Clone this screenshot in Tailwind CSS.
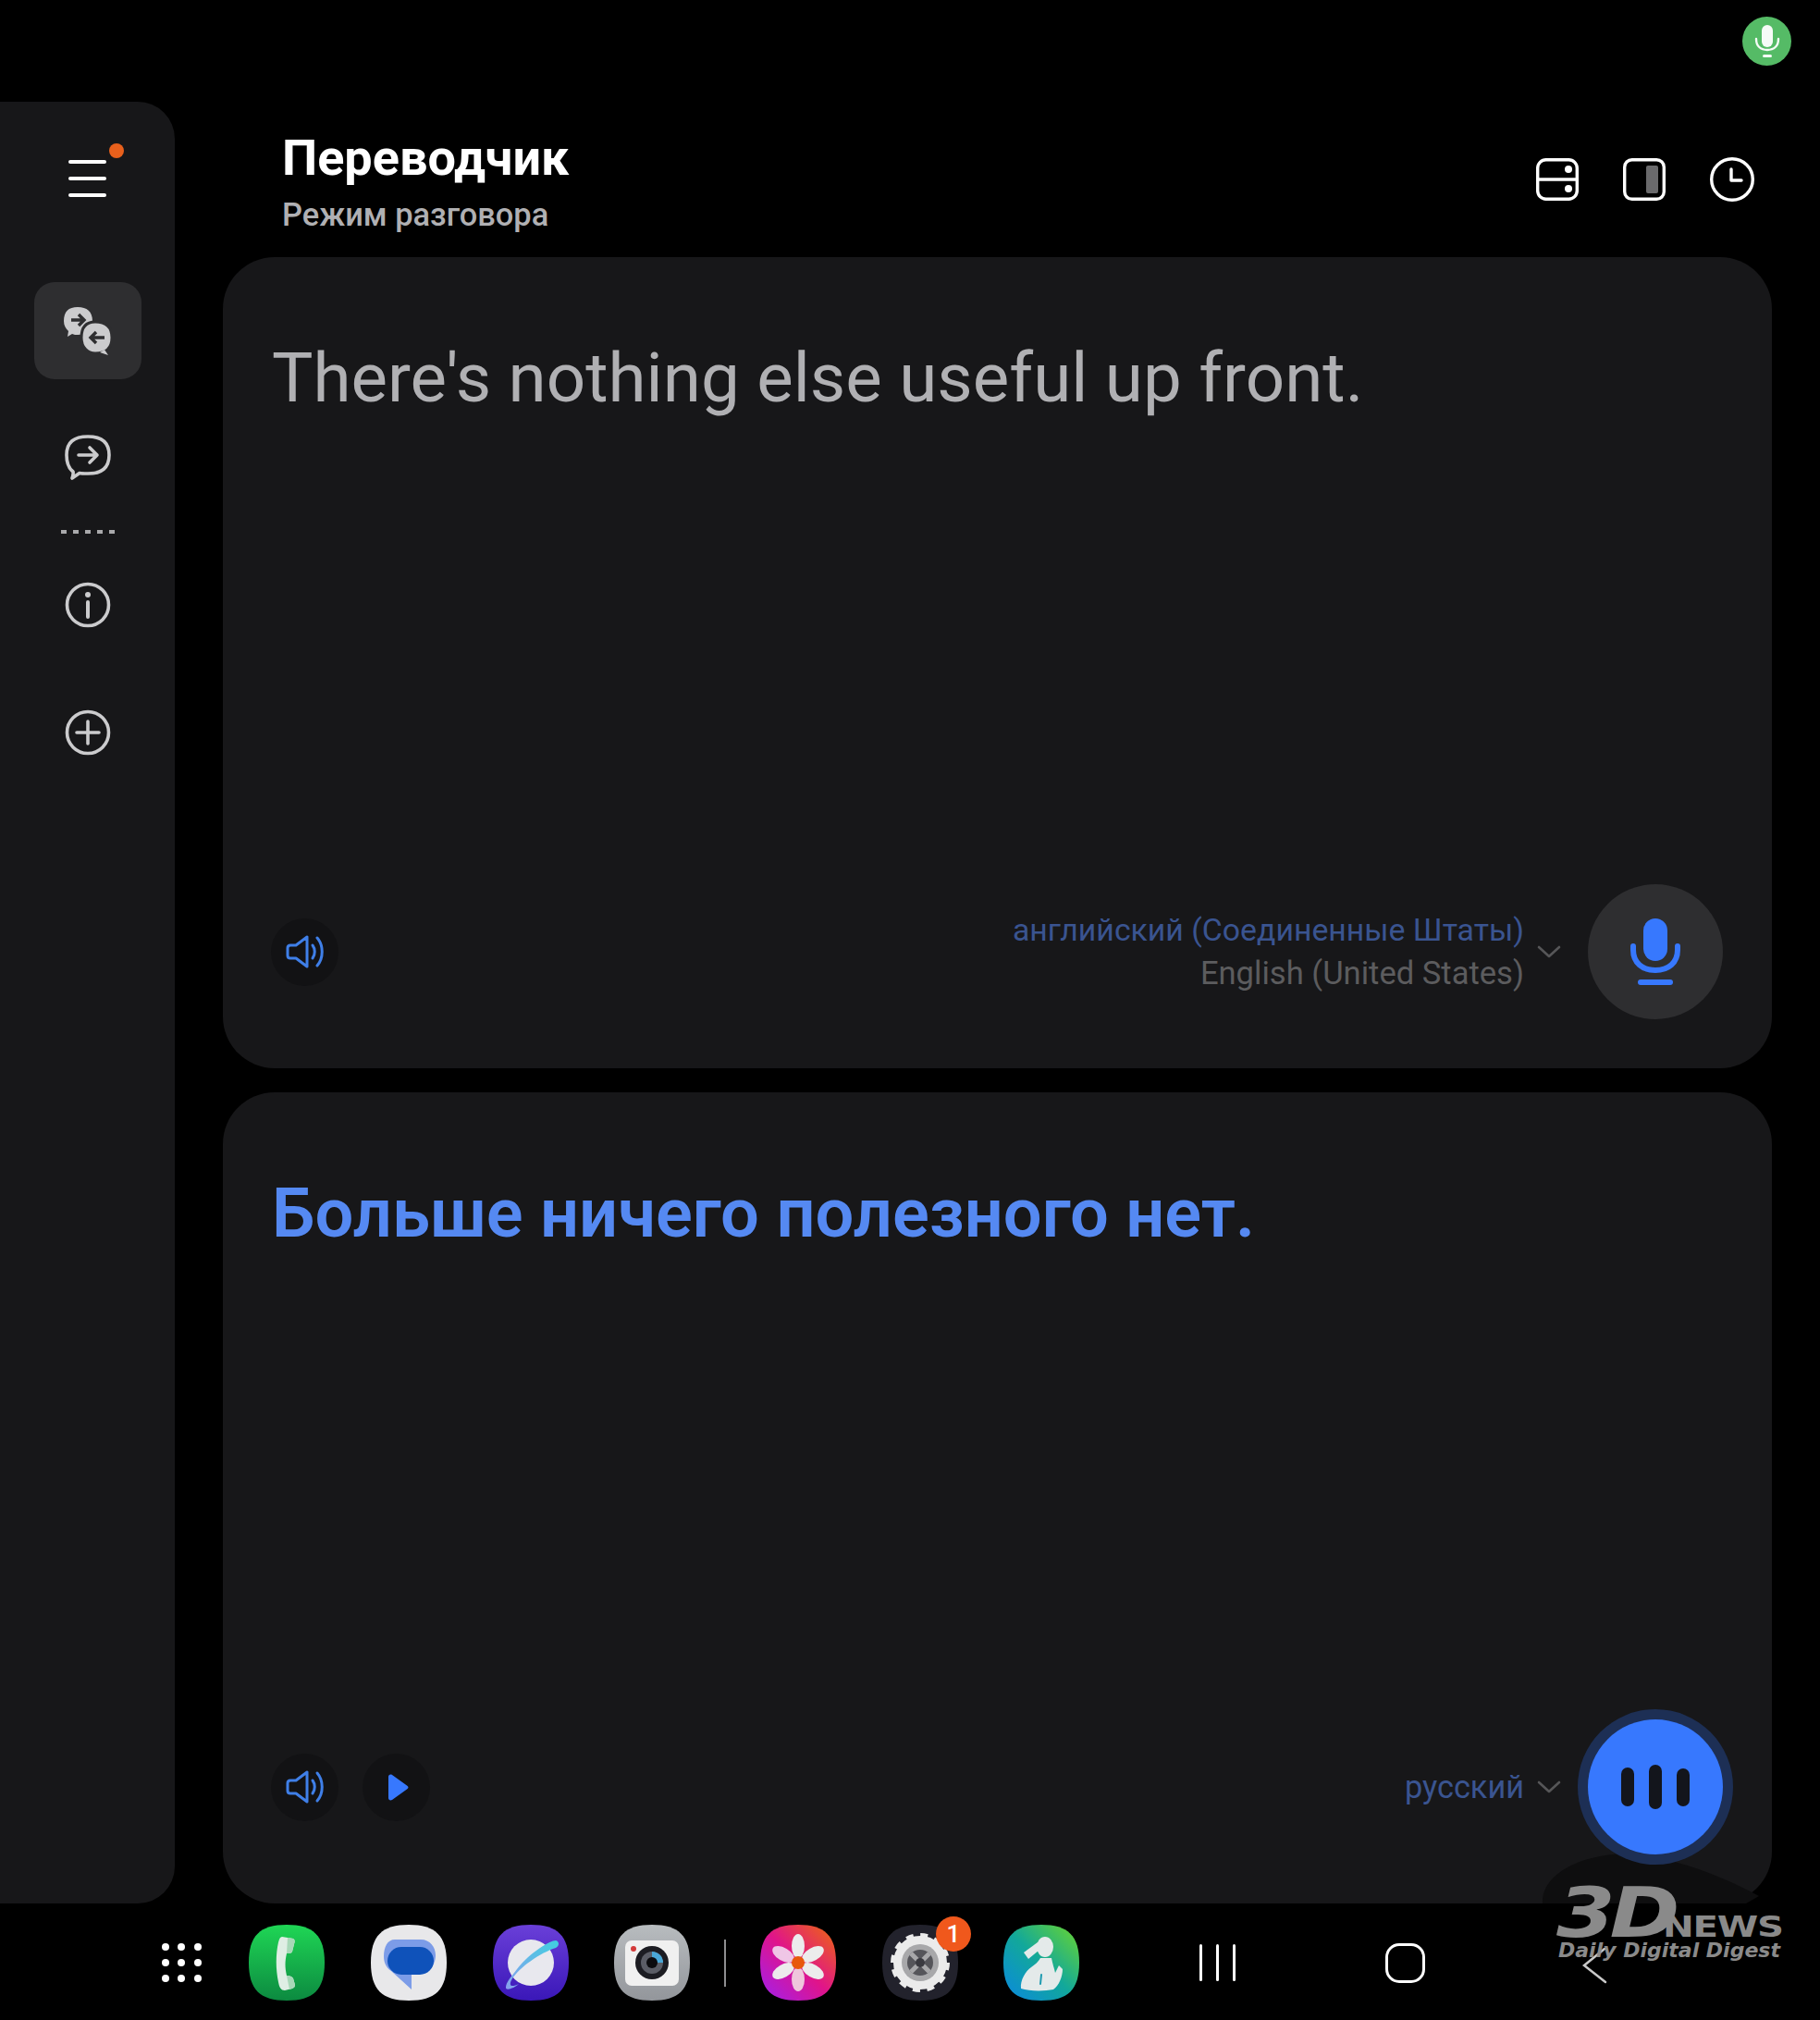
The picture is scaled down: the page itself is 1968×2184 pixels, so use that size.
<!DOCTYPE html>
<html lang="ru">
<head>
    <meta charset="UTF-8">
    <meta name="viewport" content="width=device-width, initial-scale=1.0">
    <title>Переводчик</title>
    <script src="https://cdn.jsdelivr.net/npm/@tailwindcss/browser@4"></script>
</head>
<body class="relative w-[1968px] h-[2184px] overflow-hidden bg-black font-['Roboto',sans-serif]">

    <!-- Status bar -->
    <div class="h-[110px] flex justify-end items-start pt-[18px] pr-[31px]">
        <div class="w-[53px] h-[53px] rounded-full bg-[#55bb66] flex items-center justify-center">
            <svg width="28" height="36" viewBox="0 0 28 36" fill="none">
                <rect x="8" y="0" width="12" height="24" rx="6" fill="#f6fbf7"/>
                <path d="M2 15c0 8 5 12 12 12s12-4 12-12" stroke="#f6fbf7" stroke-width="2.400" stroke-linecap="round"/>
                <rect x="9" y="32" width="10" height="3" rx="1.500" fill="#f6fbf7"/>
            </svg>
        </div>
    </div>

    <!-- Body -->
    <div class="h-[1948px] flex">
        <!-- Side rail -->
        <aside class="w-[189px] bg-[#171719] rounded-r-[40px] flex flex-col items-center relative">
            <div class="relative mt-[63px] w-[41px] flex flex-col gap-[14px]">
                <span class="block h-[4px] rounded-full bg-white"></span>
                <span class="block h-[4px] rounded-full bg-white"></span>
                <span class="block h-[4px] rounded-full bg-white"></span>
                <span class="absolute left-[44px] top-[-18px] w-[16px] h-[16px] rounded-full bg-[#e8601c]"></span>
            </div>
            <div class="mt-[92px] w-[116px] h-[105px] rounded-[22px] bg-[#2e2e30] flex items-center justify-center">
                <svg width="52" height="52" viewBox="0 0 52 52">
                    <path d="M15 0C25 0 31 5 31 15S25 30 15 30C13 30 11 30 9 29L4 32L5 26C2 23 0 20 0 15C0 5 5 0 15 0Z" fill="#cbcbcd"/>
                    <path d="M8 14H21M16 8l6 6-6 6" stroke="#2e2e30" stroke-width="3.400" fill="none"/>
                    <path d="M34 16C46 16 52 22 52 33S46 50 34 50C26 50 19 44 19 33S24 16 34 16Z" fill="#cbcbcd" stroke="#2e2e30" stroke-width="3"/>
                    <path d="M44 46l4 6-9-3z" fill="#cbcbcd"/>
                    <path d="M44 33H30M35 27l-6 6 6 6" stroke="#2e2e30" stroke-width="3.400" fill="none"/>
                </svg>
            </div>
            <svg class="mt-[60px]" width="50" height="50" viewBox="0 0 50 50" fill="none" stroke="#cbcbcd" stroke-width="3.600" stroke-linecap="round" stroke-linejoin="round">
                <path d="M25 2C40 2 48 8 48 22S40 42 25 42C21 42 18 42 16 41.500L8 47C9 44 9.500 42 9 40C4 36 2 30 2 22C2 8 10 2 25 2Z"/>
                <path d="M15 22H35M27 14l8 8-8 8"/>
            </svg>
            <div class="mt-[53px] flex gap-[7px]">
                <span class="w-[6px] h-[4px] bg-[#a9a9ab]"></span>
                <span class="w-[6px] h-[4px] bg-[#a9a9ab]"></span>
                <span class="w-[6px] h-[4px] bg-[#a9a9ab]"></span>
                <span class="w-[6px] h-[4px] bg-[#a9a9ab]"></span>
                <span class="w-[6px] h-[4px] bg-[#a9a9ab]"></span>
            </div>
            <svg class="mt-[52px]" width="50" height="50" viewBox="0 0 50 50" fill="none" stroke="#cbcbcd" stroke-width="3.600" stroke-linecap="round">
                <circle cx="25" cy="25" r="22.500"/>
                <circle cx="25" cy="14" r="3" fill="#cbcbcd" stroke="none"/>
                <path d="M25 22V38" stroke-width="4"/>
            </svg>
            <svg class="mt-[88px]" width="50" height="50" viewBox="0 0 50 50" fill="none" stroke="#cbcbcd" stroke-width="3.600" stroke-linecap="round">
                <circle cx="25" cy="25" r="22.500"/>
                <path d="M13 25H37M25 13V37"/>
            </svg>
        </aside>

        <main class="ml-[52px] w-[1675px] flex flex-col">
            <!-- Header -->
            <header class="h-[168px] flex items-start justify-between">
                <div class="pl-[64px] pt-[30px]">
                    <h1 class="text-[54px] leading-[62px] font-bold text-white">Переводчик</h1>
                    <p class="mt-[10px] text-[34.400px] leading-[40px] font-medium text-[#b0b0b3]">Режим разговора</p>
                </div>
                <div class="flex items-center gap-[48px] pt-[60px] pr-[19px]">
                    <svg width="46" height="46" viewBox="0 0 46 46" fill="none" stroke="#fff" stroke-width="3.400">
                        <rect x="1.700" y="1.700" width="42.600" height="42.600" rx="9"/>
                        <path d="M2 23H44"/>
                        <circle cx="35" cy="12" r="4" fill="#fff" stroke="none"/>
                        <circle cx="35" cy="33" r="4" fill="#fff" stroke="none"/>
                    </svg>
                    <svg width="46" height="46" viewBox="0 0 46 46" fill="none" stroke="#fff" stroke-width="3.400">
                        <rect x="1.700" y="1.700" width="42.600" height="42.600" rx="8"/>
                        <rect x="25" y="8" width="13" height="30" rx="2" fill="#6a6a6c" stroke="none"/>
                    </svg>
                    <svg width="48" height="48" viewBox="0 0 48 48" fill="none" stroke="#fff" stroke-width="3.400" stroke-linecap="round" stroke-linejoin="round">
                        <circle cx="24" cy="24" r="22.300"/>
                        <path d="M23 13V25H34"/>
                    </svg>
                </div>
            </header>

            <!-- Source card -->
            <section class="h-[877px] rounded-[56px] bg-[#171719] flex flex-col justify-between pl-[52px] pr-[53px] pb-[53px]">
                <p class="pl-[1px] pt-[78px] text-[74.500px] leading-[106px] text-[#b0b0b3]">There's nothing else useful up front.</p>
                <div class="h-[146px] flex items-center">
                    <div class="w-[73px] h-[73px] rounded-full bg-[#121214] flex items-center justify-center">
                        <svg width="42" height="36" viewBox="0 0 42 36" fill="none" stroke="#3f7fe8" stroke-width="3" stroke-linecap="round" stroke-linejoin="round">
                            <path d="M23 2V34L11 25H5C3 25 2 24 2 22V14C2 12 3 11 5 11H11Z"/>
                            <path d="M29 11C32 15 32 21 29 25"/>
                            <path d="M34 3C41 11 41 25 34 33"/>
                        </svg>
                    </div>
                    <div class="ml-auto text-right leading-[47px]">
                        <p class="text-[33.800px] text-[#3a5490]">английский (Соединенные Штаты)</p>
                        <p class="text-[34.600px] text-[#5c5c5e]">English (United States)</p>
                    </div>
                    <svg class="ml-[14px] mr-[29px]" width="26" height="14" viewBox="0 0 26 14" fill="none" stroke="#565658" stroke-width="2.600" stroke-linecap="round" stroke-linejoin="round"><path d="M2 2L13 12L24 2"/></svg>
                    <div class="w-[146px] h-[146px] rounded-full bg-[#2e2e30] flex items-center justify-center">
                        <svg width="54" height="72" viewBox="0 0 54 72" fill="none">
                            <rect x="14" y="0" width="26" height="46" rx="13" fill="#3778fe"/>
                            <path d="M3 30V34C3 48 13 56 27 56S51 48 51 34V30" stroke="#3778fe" stroke-width="6" stroke-linecap="round"/>
                            <rect x="8" y="66" width="38" height="6" rx="3" fill="#3778fe"/>
                        </svg>
                    </div>
                </div>
            </section>

            <!-- Translation card -->
            <section class="mt-[26px] h-[877px] rounded-[56px] bg-[#171719] flex flex-col justify-between pl-[52px] pr-[53px] pb-[53px]">
                <p class="pl-[1px] pt-[78px] text-[74px] leading-[106px] font-semibold text-[#5589f2]">Больше ничего полезного нет.</p>
                <div class="h-[146px] flex items-center">
                    <div class="w-[73px] h-[73px] rounded-full bg-[#121214] flex items-center justify-center">
                        <svg width="42" height="36" viewBox="0 0 42 36" fill="none" stroke="#3f7fe8" stroke-width="3" stroke-linecap="round" stroke-linejoin="round">
                            <path d="M23 2V34L11 25H5C3 25 2 24 2 22V14C2 12 3 11 5 11H11Z"/>
                            <path d="M29 11C32 15 32 21 29 25"/>
                            <path d="M34 3C41 11 41 25 34 33"/>
                        </svg>
                    </div>
                    <div class="ml-[26px] w-[73px] h-[73px] rounded-full bg-[#121214] flex items-center justify-center">
                        <svg class="ml-[2px]" width="24" height="29" viewBox="0 0 24 29"><path d="M2 3C2 1 4 0 6 1L22 12.500C24 13.500 24 15.500 22 16.500L6 28C4 29 2 28 2 26Z" fill="#3778fe"/></svg>
                    </div>
                    <p class="ml-auto text-[34.300px] leading-[47px] text-[#3a5490]">русский</p>
                    <svg class="ml-[14px] mr-[29px]" width="26" height="14" viewBox="0 0 26 14" fill="none" stroke="#565658" stroke-width="2.600" stroke-linecap="round" stroke-linejoin="round"><path d="M2 2L13 12L24 2"/></svg>
                    <div class="relative z-10 w-[146px] h-[146px] rounded-full bg-[#3778fe] ring-[11px] ring-[#1d2f55] flex items-center justify-center gap-[16px]">
                        <span class="w-[14px] h-[42px] rounded-full bg-[#13151c]"></span>
                        <span class="w-[14px] h-[48px] rounded-full bg-[#13151c]"></span>
                        <span class="w-[14px] h-[41px] rounded-full bg-[#13151c]"></span>
                    </div>
                </div>
            </section>
        </main>
    </div>

    <!-- Dock -->
    <nav class="h-[126px] pt-[2px] flex items-center">
        <div class="ml-[175px] w-[43px] grid grid-cols-3 gap-x-[9px] gap-y-[9px]">
            <span class="w-[8px] h-[8px] rounded-full bg-white"></span><span class="w-[8px] h-[8px] rounded-full bg-white"></span><span class="w-[8px] h-[8px] rounded-full bg-white"></span>
            <span class="w-[8px] h-[8px] rounded-full bg-white"></span><span class="w-[8px] h-[8px] rounded-full bg-white"></span><span class="w-[8px] h-[8px] rounded-full bg-white"></span>
            <span class="w-[8px] h-[8px] rounded-full bg-white"></span><span class="w-[8px] h-[8px] rounded-full bg-white"></span><span class="w-[8px] h-[8px] rounded-full bg-white"></span>
        </div>

        <!-- Phone -->
        <svg class="ml-[51px]" width="82" height="82" viewBox="0 0 82 82">
            <defs><linearGradient id="gPhone" x1="0" y1="0" x2="0" y2="1"><stop offset="0" stop-color="#1fd655"/><stop offset="1" stop-color="#0c8a40"/></linearGradient></defs>
            <path d="M41 0C70 0 82 12 82 41S70 82 41 82S0 70 0 41S12 0 41 0Z" fill="url(#gPhone)"/>
            <path d="M36 13L48 15C50 16 50 18 49 21L47 29C46 31 44 31 41 31C39 40 39 46 41 55C44 55 47 56 48 58L50 65C50 67 49 68 47 69L39 71C35 71 33 68 32 62C29 48 29 32 32 19C33 15 34 13 36 13Z" fill="#dfeee4"/>
            <path d="M42 14L48 15C50 16 50 18 49 21L47 29C46 31 44 31 41 31ZM41 55C44 55 47 56 48 58L50 65C50 67 49 68 47 69L44 70Z" fill="#a8d8b8"/>
        </svg>
        <!-- Messages -->
        <svg class="ml-[50px]" width="82" height="82" viewBox="0 0 82 82">
            <path d="M41 0C70 0 82 12 82 41S70 82 41 82S0 70 0 41S12 0 41 0Z" fill="#e8e8ea"/>
            <path d="M26 16H54C64 16 70 24 70 33C70 44 62 53 52 53H44V70L22 50C16 46 14 40 14 34C14 24 18 16 26 16Z" fill="#7c9ce8"/>
            <rect x="18" y="24" width="50" height="30" rx="15" fill="#0f52ba"/>
        </svg>
        <!-- Internet -->
        <svg class="ml-[50px]" width="82" height="82" viewBox="0 0 82 82">
            <defs>
                <linearGradient id="gNet" x1="0" y1="0" x2="0" y2="1"><stop offset="0" stop-color="#6a3fd8"/><stop offset="1" stop-color="#3a17b8"/></linearGradient>
                <linearGradient id="gRing" x1="1" y1="0" x2="0" y2="1"><stop offset="0" stop-color="#3fd0e0"/><stop offset="1" stop-color="#8aa0ee"/></linearGradient>
            </defs>
            <path d="M41 0C70 0 82 12 82 41S70 82 41 82S0 70 0 41S12 0 41 0Z" fill="url(#gNet)"/>
            <circle cx="41" cy="41" r="25" fill="#e8e8ee"/>
            <path d="M68 17C62 17 40 30 26 48C20 56 14 62 14 68C14 72 24 68 28 64C20 68 17 66 20 60C28 46 52 30 68 25C72 23 72 18 68 17Z" fill="url(#gRing)"/>
        </svg>
        <!-- Camera -->
        <svg class="ml-[49px]" width="82" height="82" viewBox="0 0 82 82">
            <defs><linearGradient id="gCam" x1="0" y1="0" x2="0" y2="1"><stop offset="0" stop-color="#b8bcbf"/><stop offset="1" stop-color="#93969b"/></linearGradient></defs>
            <path d="M41 0C70 0 82 12 82 41S70 82 41 82S0 70 0 41S12 0 41 0Z" fill="url(#gCam)"/>
            <rect x="12" y="17" width="58" height="49" rx="7" fill="#f0f0f0"/>
            <circle cx="21" cy="26" r="3" fill="#d33a3a"/>
            <circle cx="41" cy="41" r="18" fill="#1c1c22"/>
            <circle cx="41" cy="41" r="12" fill="#5b5d66"/>
            <path d="M41 29A12 12 0 0 1 53 41H41Z" fill="#4aa8d8"/>
            <circle cx="41" cy="41" r="6" fill="#0b0b0e"/>
        </svg>

        <span class="ml-[37px] w-[2px] h-[51px] bg-[#8e8e90]"></span>

        <!-- Gallery -->
        <svg class="ml-[37px]" width="82" height="82" viewBox="0 0 82 82">
            <defs>
                <linearGradient id="gGal" x1="0" y1="1" x2="1" y2="0"><stop offset="0" stop-color="#a020f0"/><stop offset="0.500" stop-color="#e0148a"/><stop offset="1" stop-color="#ee6a0c"/></linearGradient>
            </defs>
            <path d="M41 0C70 0 82 12 82 41S70 82 41 82S0 70 0 41S12 0 41 0Z" fill="url(#gGal)"/>
            <g fill="#ececec">
                <ellipse cx="41" cy="23" rx="7" ry="13"/>
                <ellipse cx="41" cy="59" rx="7" ry="13" fill="#efc6dc"/>
                <ellipse cx="25" cy="32" rx="7" ry="13" transform="rotate(-60 25 32)" fill="#efc6e6"/>
                <ellipse cx="57" cy="32" rx="7" ry="13" transform="rotate(60 57 32)"/>
                <ellipse cx="25" cy="50" rx="7" ry="13" transform="rotate(60 25 50)"/>
                <ellipse cx="57" cy="50" rx="7" ry="13" transform="rotate(-60 57 50)"/>
            </g>
            <circle cx="41" cy="41" r="7" fill="#e8580c"/>
        </svg>
        <!-- Settings -->
        <div class="relative ml-[50px] w-[82px] h-[82px]">
            <svg width="82" height="82" viewBox="0 0 82 82">
                <path d="M41 0C70 0 82 12 82 41S70 82 41 82S0 70 0 41S12 0 41 0Z" fill="#22222c"/>
                <circle cx="41" cy="41" r="24" fill="none" stroke="#ebebeb" stroke-width="10"/>
                <circle cx="41" cy="41" r="29.500" fill="none" stroke="#ebebeb" stroke-width="5" stroke-dasharray="8 7.440"/>
                <circle cx="41" cy="41" r="20" fill="#a8a8aa"/>
                <circle cx="41" cy="41" r="14" fill="#55555a"/>
                <path d="M31 31L51 51M51 31L31 51" stroke="#a8a8aa" stroke-width="5"/>
                <circle cx="41" cy="41" r="5" fill="#3a3a40"/>
            </svg>
            <span class="absolute left-[58px] top-[-9px] w-[38px] h-[38px] rounded-full bg-[#f0581c] text-white text-[26px] leading-[38px] font-medium text-center">1</span>
        </div>
        <!-- Health -->
        <svg class="ml-[49px]" width="82" height="82" viewBox="0 0 82 82">
            <defs><linearGradient id="gHealth" x1="0" y1="1" x2="1" y2="0"><stop offset="0" stop-color="#0a88e0"/><stop offset="0.500" stop-color="#12a89a"/><stop offset="1" stop-color="#6cd62c"/></linearGradient></defs>
            <path d="M41 0C70 0 82 12 82 41S70 82 41 82S0 70 0 41S12 0 41 0Z" fill="url(#gHealth)"/>
            <g fill="#e4eaea">
                <ellipse cx="45" cy="24" rx="9" ry="11"/>
                <path d="M37 19L22 30L27 37L38 28Z"/>
                <path d="M40 36H52C53 42 55 47 56 52L60 44L64 48C64 56 60 66 54 70C44 72 28 72 19 69C18 60 24 50 30 46C34 43 38 40 40 36Z"/>
            </g>
            <path d="M41 54L40 64" stroke="#1c9ab0" stroke-width="2" stroke-linecap="round"/>
        </svg>

        <!-- System navigation -->
        <div class="ml-[130px] flex gap-[15px] h-[40px]">
            <span class="w-[3px] bg-white rounded-full"></span>
            <span class="w-[3px] bg-white rounded-full"></span>
            <span class="w-[3px] bg-white rounded-full"></span>
        </div>
        <span class="ml-[162px] w-[43px] h-[43px] rounded-[15px] border-[3px] border-white"></span>
        <svg class="ml-[169px] mt-[6px]" width="28" height="40" viewBox="0 0 28 40" fill="none" stroke="#c9c9c9" stroke-width="2.500" stroke-linecap="round"><path d="M25 2L3 20L26 38"/></svg>
    </nav>

    <!-- Watermark -->
    <svg class="absolute left-[1664px] top-[2004px]" width="240" height="54" viewBox="0 0 240 54"><path d="M4 54C2 30 30 6 80 1C130 -2 190 20 238 46L224 54Z" fill="#0e0e0f"/></svg>
    <div class="absolute left-[1683px] top-[2022px] w-[245px] h-[100px] text-[#8a8a8a] font-['DejaVu_Sans',sans-serif] font-bold">
        <span class="absolute left-0 top-[17px] origin-left scale-x-[1.22] italic text-[75px] leading-[58px] tracking-[-5px]">3D</span>
        <span class="absolute left-[115px] top-[48px] origin-left scale-x-[1.26] text-[32px] leading-[27px] tracking-[-1px]">NEWS</span>
        <span class="absolute left-[2px] top-[75px] italic text-[22px] leading-[24px] whitespace-nowrap">Daily Digital Digest</span>
    </div>
</body>
</html>
